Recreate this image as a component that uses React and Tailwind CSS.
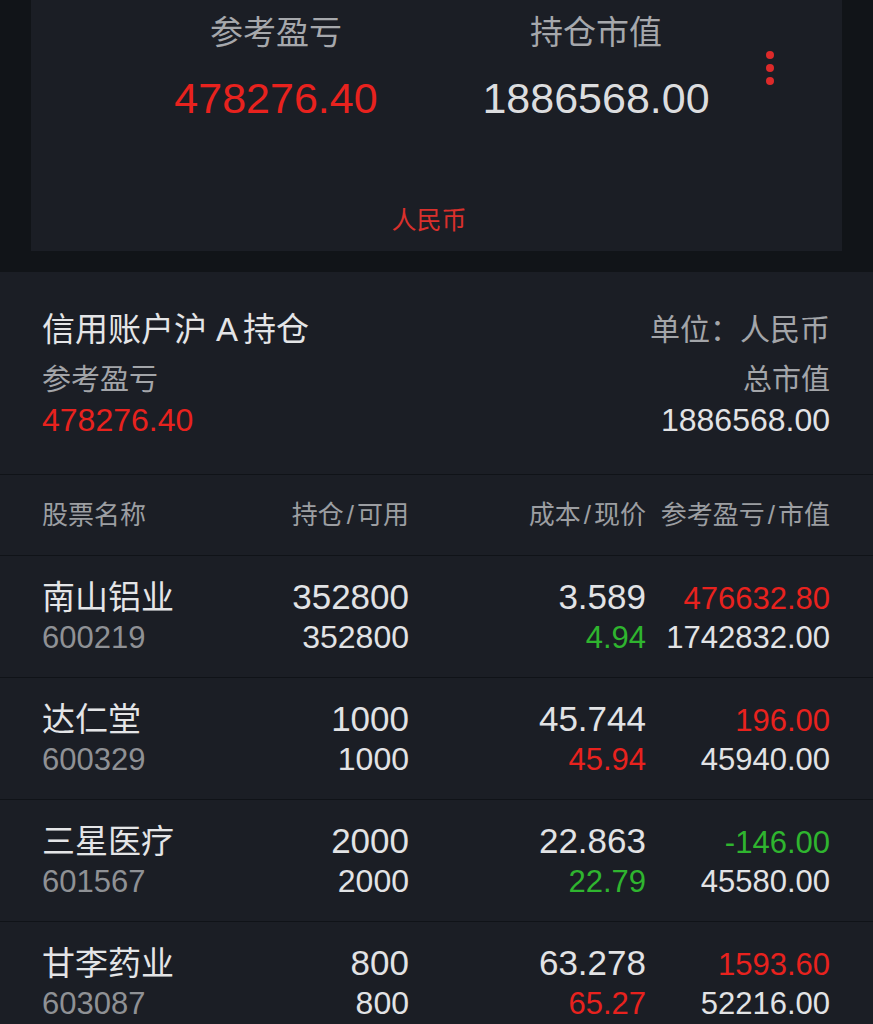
import React from "react";

const FONT = { fontFamily: '"Liberation Sans", "Noto Sans CJK SC", sans-serif' };

const RED = "text-[#e8221e]";
const GREEN = "text-[#2fb52f]";
const WHITE = "text-[#e2e3e5]";

const rows = [
  {
    name: "南山铝业",
    code: "600219",
    hold: "352800",
    avail: "352800",
    cost: "3.589",
    costC: WHITE,
    price: "4.94",
    priceC: GREEN,
    pl: "476632.80",
    plC: RED,
    mv: "1742832.00",
  },
  {
    name: "达仁堂",
    code: "600329",
    hold: "1000",
    avail: "1000",
    cost: "45.744",
    costC: WHITE,
    price: "45.94",
    priceC: RED,
    pl: "196.00",
    plC: RED,
    mv: "45940.00",
  },
  {
    name: "三星医疗",
    code: "601567",
    hold: "2000",
    avail: "2000",
    cost: "22.863",
    costC: WHITE,
    price: "22.79",
    priceC: GREEN,
    pl: "-146.00",
    plC: GREEN,
    mv: "45580.00",
  },
  {
    name: "甘李药业",
    code: "603087",
    hold: "800",
    avail: "800",
    cost: "63.278",
    costC: WHITE,
    price: "65.27",
    priceC: RED,
    pl: "1593.60",
    plC: RED,
    mv: "52216.00",
  },
];

const GRID = "grid grid-cols-[208px_159px_237px_184px]";

function Slash() {
  return <span className="px-[3px]">/</span>;
}

export default function App() {
  return (
    <div className="w-[873px] h-[1024px] overflow-hidden bg-[#111418]" style={FONT}>
      {/* Top summary card */}
      <div className="px-[31px] pb-[21px] bg-[#111418]">
        <div className="h-[251px] bg-[#1b1e25] flex flex-col">
          <div className="flex pl-[85px] pt-[13px]">
            <div className="w-[320px] flex flex-col items-center">
              <div className="text-[33px] leading-[40px] text-[#a6a8ac]">参考盈亏</div>
              <div className={`mt-[20px] text-[43px] leading-[50px] ${RED}`}>478276.40</div>
            </div>
            <div className="w-[320px] flex flex-col items-center">
              <div className="text-[33px] leading-[40px] text-[#a6a8ac]">持仓市值</div>
              <div className="mt-[20px] text-[43px] leading-[50px] text-[#dcdddf]">1886568.00</div>
            </div>
            <div className="ml-[10px] mt-[38px] flex flex-col gap-[5px]">
              <span className="block w-[8px] h-[8px] rounded-full bg-[#dd2a2a]" />
              <span className="block w-[8px] h-[8px] rounded-full bg-[#dd2a2a]" />
              <span className="block w-[8px] h-[8px] rounded-full bg-[#dd2a2a]" />
            </div>
          </div>
          <div className="mt-auto pb-[15px] pr-[15px] text-center text-[25px] leading-[32px] text-[#d9302c]">
            人民币
          </div>
        </div>
      </div>

      {/* Account section */}
      <div className="bg-[#1b1e25]">
        <div className="px-[42px] pr-[43px] pt-[38px] pb-[34px] border-b border-[#101318]">
          <div className="flex justify-between items-center h-[40px]">
            <div className="text-[33px] leading-[40px] text-[#e4e5e7]">
              信用账户沪<span className="ml-[9px] mr-[5px]">A</span>持仓
            </div>
            <div className="text-[30px] leading-[40px] text-[#a3a5a9]">单位：人民币</div>
          </div>
          <div className="mt-[12px] flex justify-between items-center h-[36px]">
            <div className="text-[29px] leading-[36px] text-[#a3a5a9]">参考盈亏</div>
            <div className="text-[29px] leading-[36px] text-[#a3a5a9]">总市值</div>
          </div>
          <div className="mt-[2px] flex justify-between items-center h-[40px]">
            <div className={`text-[32px] leading-[40px] ${RED}`}>478276.40</div>
            <div className="text-[32px] leading-[40px] text-[#e2e3e5]">1886568.00</div>
          </div>
        </div>

        {/* Column header */}
        <div className={`${GRID} items-center h-[81px] pl-[42px] border-b border-[#101318] text-[26px] leading-[36px] text-[#9c9ea2]`}>
          <div>股票名称</div>
          <div className="text-right">持仓<Slash />可用</div>
          <div className="text-right">成本<Slash />现价</div>
          <div className="text-right">参考盈亏<Slash />市值</div>
        </div>

        {rows.map((r) => (
          <div key={r.code} className="h-[122px] pl-[42px] pt-[21px] border-b border-[#101318]">
            <div className={`${GRID} items-baseline h-[40px] leading-[40px]`}>
              <div className="text-[33px] text-[#e4e5e7]">{r.name}</div>
              <div className="text-[35px] text-right text-[#e2e3e5]">{r.hold}</div>
              <div className={`text-[35px] text-right ${r.costC}`}>{r.cost}</div>
              <div className={`text-[31px] text-right ${r.plC}`}>{r.pl}</div>
            </div>
            <div className={`${GRID} items-baseline h-[40px] leading-[40px]`}>
              <div className="text-[31px] text-[#8f9195]">{r.code}</div>
              <div className="text-[32px] text-right text-[#e2e3e5]">{r.avail}</div>
              <div className={`text-[31px] text-right ${r.priceC}`}>{r.price}</div>
              <div className="text-[31px] text-right text-[#e2e3e5]">{r.mv}</div>
            </div>
          </div>
        ))}
      </div>
    </div>
  );
}
